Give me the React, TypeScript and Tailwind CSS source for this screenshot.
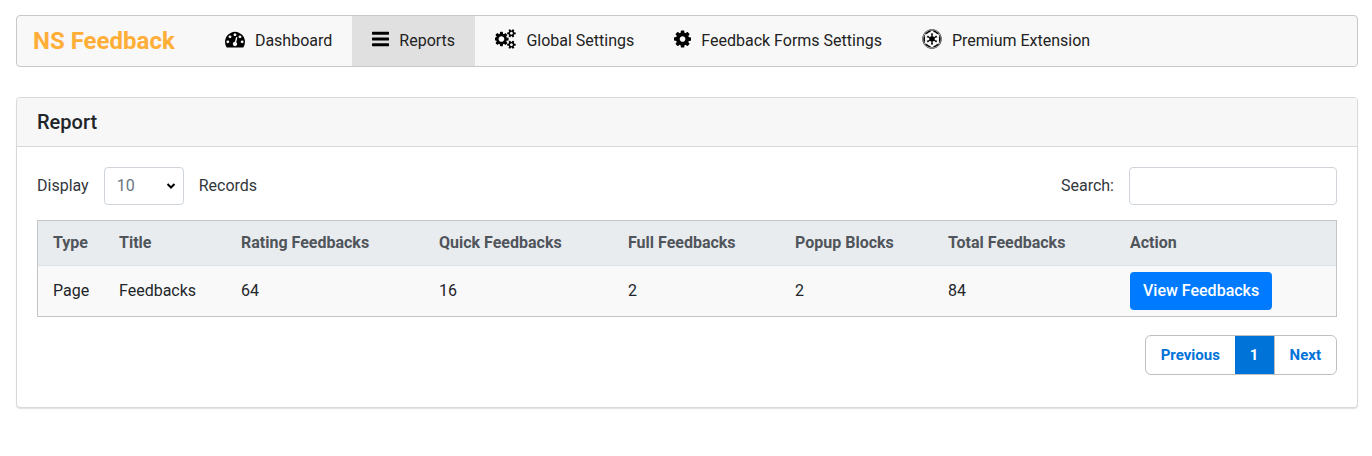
import type { ReactNode } from "react";
import { FaEmpire } from "react-icons/fa";

interface IconProps {
  viewBox: string;
  className: string;
  d: string;
}

function Glyph({ viewBox, className, d }: IconProps) {
  return (
    <svg viewBox={viewBox} className={className} fill="currentColor" aria-hidden="true">
      <path d={d} />
    </svg>
  );
}

const dashboardPath =
  "M384 1152q0-53-37.5-90.5t-90.5-37.5-90.5 37.5-37.5 90.5 37.5 90.5 90.5 37.5 90.5-37.5 37.5-90.5zm192-448q0-53-37.5-90.5t-90.5-37.5-90.5 37.5-37.5 90.5 37.5 90.5 90.5 37.5 90.5-37.5 37.5-90.5zm428 481l101-382q6-26-7.5-48.5t-38.5-29.5-48 6.5-30 39.5l-101 382q-60 5-107 43.5t-63 98.5q-20 77 20 146t117 89 146-20 89-117q16-60-6-117t-72-91zm660-33q0-53-37.5-90.5t-90.5-37.5-90.5 37.5-37.5 90.5 37.5 90.5 90.5 37.5 90.5-37.5 37.5-90.5zm-640-640q0-53-37.5-90.5t-90.5-37.5-90.5 37.5-37.5 90.5 37.5 90.5 90.5 37.5 90.5-37.5 37.5-90.5zm448 192q0-53-37.5-90.5t-90.5-37.5-90.5 37.5-37.5 90.5 37.5 90.5 90.5 37.5 90.5-37.5 37.5-90.5zm320 448q0 261-141 483-19 29-54 29h-1402q-35 0-54-29-141-221-141-483 0-182 71-348t191-286 286-191 348-71 348 71 286 191 191 286 71 348z";

const barsPath =
  "M1664 1344v128q0 26-19 45t-45 19h-1408q-26 0-45-19t-19-45v-128q0-26 19-45t45-19h1408q26 0 45 19t19 45zm0-512v128q0 26-19 45t-45 19h-1408q-26 0-45-19t-19-45v-128q0-26 19-45t45-19h1408q26 0 45 19t19 45zm0-512v128q0 26-19 45t-45 19h-1408q-26 0-45-19t-19-45v-128q0-26 19-45t45-19h1408q26 0 45 19t19 45z";

const cogPath =
  "M1152 896q0-106-75-181t-181-75-181 75-75 181 75 181 181 75 181-75 75-181zm512-109v222q0 12-8 23t-20 13l-185 28q-19 54-39 91 35 50 107 138 10 12 10 25t-9 23q-27 37-99 108t-94 71q-12 0-26-9l-138-108q-44 23-91 38-16 136-29 186-7 28-36 28h-222q-14 0-24.5-8.5t-11.5-21.5l-28-184q-49-16-90-37l-141 107q-10 9-25 9-14 0-25-11-126-114-165-168-7-10-7-23 0-12 8-23 15-21 51-66.5t54-70.5q-27-50-41-99l-183-27q-13-2-21-12.5t-8-23.5v-222q0-12 8-23t19-13l186-28q14-46 39-92-40-57-107-138-10-12-10-24 0-10 9-23 26-36 98.5-107.5t94.5-71.5q13 0 26 10l138 107q44-23 91-38 16-136 29-186 7-28 36-28h222q14 0 24.5 8.5t11.5 21.5l28 184q49 16 90 37l142-107q9-9 24-9 13 0 25 10 129 119 165 170 7 8 7 22 0 12-8 23-15 21-51 66.5t-54 70.5q26 50 41 98l183 28q13 2 21 12.5t8 23.5z";

const smallCog =
  "v140q0 16-149 31-12 27-30 52 51 113 51 138 0 4-4 7-122 71-124 71-8 0-46-47t-52-68q-20 2-30 2t-30-2q-14 21-52 68t-46 47q-2 0-124-71-4-3-4-7 0-25 51-138-18-25-30-52-149-15-149-31v-140q0-16 149-31 13-29 30-52-51-113-51-138 0-4 4-7 4-2 35-20t59-34 30-16q8 0 46 46.5t52 67.5q20-2 30-2t30 2q51-71 92-112l6-2q4 0 124 70 4 3 4 7 0 25-51 138 17 23 30 52 149 15 149 31z";

const cogsPath =
  "M832 896q0-106-75-181t-181-75-181 75-75 181 75 181 181 75 181-75 75-181zm768 512q0-52-38-90t-90-38-90 38-38 90q0 53 37.5 90.5t90.5 37.5 90.5-37.5 37.5-90.5zm0-1024q0-52-38-90t-90-38-90 38-38 90q0 53 37.5 90.5t90.5 37.5 90.5-37.5 37.5-90.5zm-384 421v185q0 10-7 19.5t-16 10.5l-155 24q-11 35-32 76 34 48 90 115 7 11 7 20 0 12-7 19-23 30-82.5 89.5t-78.5 59.5q-11 0-21-7l-115-90q-37 19-77 31-11 108-23 155-7 24-30 24h-186q-11 0-20-7.5t-10-17.5l-23-153q-34-10-75-31l-118 89q-7 7-20 7-11 0-21-8-144-133-144-160 0-9 7-19 10-14 41-53t47-61q-23-44-35-82l-152-24q-10-1-17-9.5t-7-19.5v-185q0-10 7-19.5t16-10.5l155-24q11-35 32-76-34-48-90-115-7-11-7-20 0-12 7-20 22-30 82-89t79-59q11 0 21 7l115 90q34-18 77-32 11-108 23-154 7-24 30-24h186q11 0 20 7.5t10 17.5l23 153q34 10 75 31l118-89q8-7 20-7 11 0 21 8 144 133 144 160 0 8-7 19-12 16-42 54t-45 60q23 48 34 82l152 23q10 2 17 10.5t7 19.5z" +
  "M1856 1338" + smallCog +
  "M1856 314" + smallCog;

interface NavItem {
  label: string;
  icon: ReactNode;
  active?: boolean;
}

const navItems: NavItem[] = [
  {
    label: "Dashboard",
    icon: <Glyph viewBox="0 0 1792 1792" className="h-5 w-5" d={dashboardPath} />,
  },
  {
    label: "Reports",
    icon: <Glyph viewBox="128 0 1536 1792" className="h-5 w-[17.14px]" d={barsPath} />,
    active: true,
  },
  {
    label: "Global Settings",
    icon: <Glyph viewBox="0 0 1920 1792" className="h-5 w-[21.43px]" d={cogsPath} />,
  },
  {
    label: "Feedback Forms Settings",
    icon: <Glyph viewBox="128 0 1536 1792" className="h-5 w-[17.14px]" d={cogPath} />,
  },
  {
    label: "Premium Extension",
    icon: <FaEmpire className="h-5 w-5" />,
  },
];

const columns = [
  { label: "Type", width: "w-[66px]" },
  { label: "Title", width: "w-[122px]" },
  { label: "Rating Feedbacks", width: "w-[198px]" },
  { label: "Quick Feedbacks", width: "w-[189px]" },
  { label: "Full Feedbacks", width: "w-[167px]" },
  { label: "Popup Blocks", width: "w-[153px]" },
  { label: "Total Feedbacks", width: "w-[182px]" },
  { label: "Action", width: "" },
];

const rows = [["Page", "Feedbacks", "64", "16", "2", "2", "84"]];

function Navbar() {
  return (
    <nav className="flex h-[52px] rounded border border-[#c8c8c8] bg-[#f8f8f8]">
      <a className="flex w-[188px] items-center pl-4 text-2xl font-bold text-[#ffae37]">NS Feedback</a>
      {navItems.map((item) => (
        <a
          key={item.label}
          className={`flex items-center gap-[9.9px] px-5 ${item.active ? "bg-[#e0e0e0]" : ""}`}
        >
          <span className="-mt-1 text-black">{item.icon}</span>
          <span className="text-[#222]">{item.label}</span>
        </a>
      ))}
    </nav>
  );
}

function ReportTable() {
  return (
    <table className="mt-[15px] w-full table-fixed border-separate border-spacing-0 border border-[#c3c4c7] text-left">
      <thead className="bg-[#e9ecef] text-[#50555b]">
        <tr className="h-[45px]">
          {columns.map((col) => (
            <th key={col.label} className={`border-b border-[#dee2e6] pl-[15px] font-bold ${col.width}`}>
              {col.label}
            </th>
          ))}
        </tr>
      </thead>
      <tbody className="bg-[#f9f9f9] text-[#212529]">
        {rows.map((row) => (
          <tr key={row[0]} className="h-[50px]">
            {row.map((cell, i) => (
              <td key={i} className="pl-[15px]">
                {cell}
              </td>
            ))}
            <td className="pl-[15px]">
              <button className="block h-[38px] rounded bg-[#007bff] px-[13px] font-medium text-white">
                View Feedbacks
              </button>
            </td>
          </tr>
        ))}
      </tbody>
    </table>
  );
}

function Pagination() {
  return (
    <div className="mt-[18px] flex justify-end text-[15px] font-bold text-[#0073d8]">
      <div className="flex h-10 overflow-hidden rounded-md border border-[#bfbfbf]">
        <button className="w-[88.6px] text-center">Previous</button>
        <button className="w-[39px] bg-[#0073d8] text-white">1</button>
        <button className="border-l border-[#bfbfbf] px-[15px]">Next</button>
      </div>
    </div>
  );
}

export default function App() {
  return (
    <div className="h-[456px] bg-white pt-[15px] pr-3.5 pl-4 font-[Roboto,sans-serif] text-base leading-6 text-[#212529]">
      <Navbar />
      <section className="mt-[30px] h-[311px] overflow-hidden rounded border border-[#d9d9d9] bg-white shadow-[0_1px_1px_rgba(0,0,0,0.12)]">
        <h2 className="flex h-[49px] items-center border-b border-[#d9d9d9] bg-[#f7f7f7] px-5 text-xl font-medium">
          Report
        </h2>
        <div className="px-5 pt-5">
          <div className="flex items-center justify-between text-[#32373c]">
            <label className="flex items-center gap-[15px]">
              Display
              <span className="flex h-[38px] w-20 items-center justify-between rounded border border-[#ced4da] pr-[7px] pl-3 text-[#6c757d]">
                10
                <svg viewBox="0 0 10 8" className="h-2 w-2.5 text-black" fill="none" stroke="currentColor" strokeWidth="2">
                  <path d="M1.5 2L5 5.5L8.5 2" />
                </svg>
              </span>
              Records
            </label>
            <label className="flex items-center gap-[15px]">
              Search:
              <input className="h-[38px] w-[208px] rounded border border-[#ced4da]" />
            </label>
          </div>
          <ReportTable />
          <Pagination />
        </div>
      </section>
    </div>
  );
}
